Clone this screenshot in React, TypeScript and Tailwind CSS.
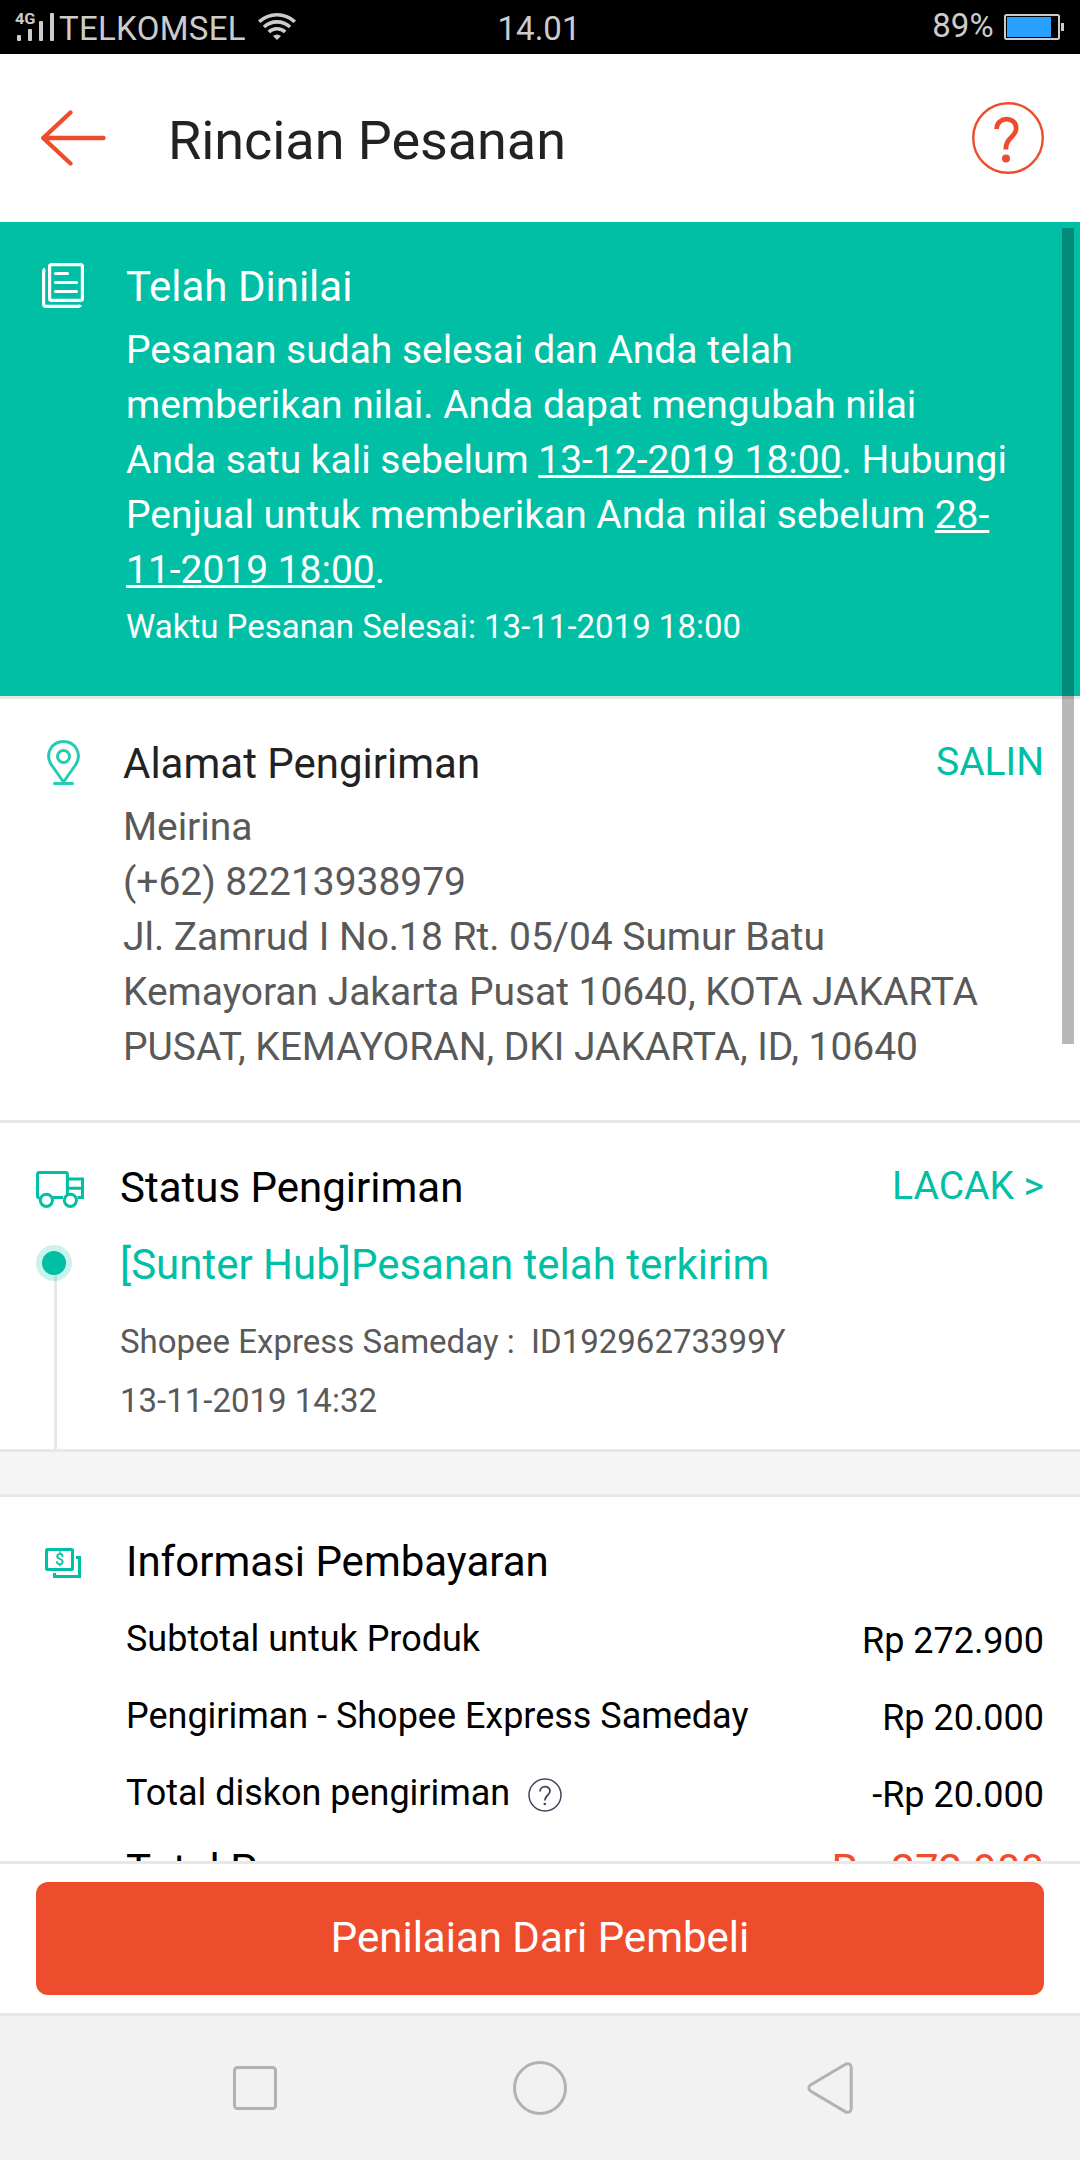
import type { ReactNode } from "react";

function SignalIcon() {
  return (
    <svg width="44" height="54" viewBox="0 0 44 54" className="ml-[15px] shrink-0 overflow-visible" fill="#cccccc">
      <text x="0" y="24" fontFamily="Roboto, sans-serif" fontWeight="700" fontSize="15.5" textLength="20.5" lengthAdjust="spacingAndGlyphs">4G</text>
      <rect x="2" y="35" width="4" height="6" rx="1" />
      <rect x="13" y="29" width="4" height="12" rx="1" />
      <rect x="24" y="21" width="4" height="20" rx="1" />
      <rect x="35" y="13" width="4" height="28" rx="1" />
    </svg>
  );
}

function WifiIcon() {
  return (
    <svg width="40" height="30" viewBox="0 0 40 30" className="absolute left-[257px] top-3" fill="none" stroke="#cccccc" strokeWidth="3.6">
      <path d="M2.2 9.8 A26 26 0 0 1 37.8 9.8" />
      <path d="M7 15 A19 19 0 0 1 33 15" />
      <path d="M11.8 20 A12 12 0 0 1 28.2 20" />
      <path d="M20 28 L16 24 Q20 21 24 24 Z" fill="#cccccc" stroke="none" />
    </svg>
  );
}

function BatteryIcon() {
  return (
    <svg width="60" height="26" viewBox="0 0 60 26" className="absolute right-4 top-[14px]">
      <rect x="1" y="1" width="54" height="24" rx="1.5" fill="none" stroke="#cccccc" strokeWidth="2" />
      <rect x="3" y="3" width="44" height="20" fill="#27a0ff" />
      <rect x="57" y="9" width="3" height="8" fill="#cccccc" />
    </svg>
  );
}

function StatusBar() {
  return (
    <div className="relative flex h-[54px] shrink-0 bg-black text-[33px] leading-[54px] text-[#cccccc]">
      <SignalIcon />
      <span className="pt-0.5 tracking-[0.3px]">TELKOMSEL</span>
      <WifiIcon />
      <span className="absolute left-[539px] -translate-x-1/2 pt-0.5">14.01</span>
      <span className="absolute right-[86px] -mt-px tracking-[0.2px]">89%</span>
      <BatteryIcon />
    </div>
  );
}

function Header() {
  return (
    <header className="flex h-[168px] shrink-0 items-center pl-9 pr-9">
      <svg width="72" height="60" viewBox="0 0 72 60" fill="none" stroke="#ee4d2d" strokeWidth="4.4" strokeLinecap="round" strokeLinejoin="round">
        <path d="M34.5 4.5 L7.2 30 L34.5 55.5 M7.2 30 H67.5" />
      </svg>
      <h1 className="ml-15 mt-[5px] text-[54px] leading-[64px] tracking-[-0.06px] text-[#222222]">Rincian Pesanan</h1>
      <svg width="72" height="72" viewBox="0 0 72 72" className="ml-auto" fill="none" stroke="#ee4d2d">
        <circle cx="36" cy="36" r="34.8" strokeWidth="2.4" />
        <path d="M24.6 27 C24.6 14 44.4 14 44.2 26.2 C44 35.5 33.8 35 33.8 47.5" strokeWidth="4.8" />
        <circle cx="34" cy="56.5" r="4" fill="#ee4d2d" stroke="none" />
      </svg>
    </header>
  );
}

function NotesIcon() {
  return (
    <svg width="42" height="45" viewBox="0 0 42 45" className="ml-[42px] mt-[41px]" fill="none" stroke="white" strokeWidth="3.2">
      <rect x="7.6" y="1.6" width="32.8" height="35.8" rx="2" />
      <path d="M3 6 Q1.6 6.8 1.6 9 V41 Q1.6 43.4 4 43.4 H36.5 Q38 43.2 38.6 42" />
      <path d="M13.5 10.5 H25.5 M13.5 19.5 H34.5 M13.5 28.5 H34.5" strokeLinecap="round" />
    </svg>
  );
}

function PinIcon() {
  return (
    <svg width="34" height="46" viewBox="0 0 34 46" className="ml-[47px] mt-[41px]" fill="none" stroke="#26cbb4" strokeWidth="3">
      <path d="M16.5 42 L4.2 24.5 C-2.5 13.5 5 1.5 16.5 1.5 S35.5 13.5 28.8 24.5 Z" strokeLinejoin="round" />
      <circle cx="16.5" cy="16.5" r="6" />
      <path d="M7.5 43.5 H25.5" strokeLinecap="round" />
    </svg>
  );
}

function TruckIcon() {
  return (
    <svg width="48" height="37" viewBox="0 0 48 37" className="ml-9 mt-12" fill="none" stroke="#00bfa5" strokeWidth="3">
      <path d="M3.8 27 Q1.5 27 1.5 24.7 V3.2 Q1.5 1.5 3.3 1.5 H29.7 Q31.4 1.5 31.4 3.2 V24 M17 26.5 H27 M32 8 H46.5 V26.5 H41.5 M32 17.3 H46" />
      <circle cx="10.4" cy="29.3" r="6.1" />
      <circle cx="34.4" cy="29.3" r="6.1" />
    </svg>
  );
}

function MoneyIcon() {
  return (
    <svg width="36" height="30" viewBox="0 0 36 30" className="ml-[45px] mt-[51px]" fill="none" stroke="#00bfa5" strokeWidth="3">
      <rect x="1.5" y="1.5" width="26" height="20" rx="1" />
      <path d="M31 9.5 H34.5 V28.5 H9.5 V25" />
      <text x="14.5" y="17.2" textAnchor="middle" fontFamily="Roboto, sans-serif" fontSize="16" fontWeight="500" fill="#00bfa5" stroke="none">$</text>
    </svg>
  );
}

function HelpIcon() {
  return (
    <svg width="34" height="34" viewBox="0 0 34 34" className="ml-[18px] mt-0.5" fill="none" stroke="#434359" strokeWidth="1.5">
      <circle cx="17" cy="17" r="16" />
      <path d="M12 13.6 C12 7.2 22 7.2 22 13 C22 17.5 16.8 17 16.8 22.6" strokeWidth="1.8" />
      <circle cx="16.8" cy="26" r="1.3" fill="#434359" stroke="none" />
    </svg>
  );
}

function Section({ icon, inset, children }: { icon: ReactNode; inset: string; children: ReactNode }) {
  return (
    <div className="flex h-full">
      <div className={`shrink-0 ${inset}`}>{icon}</div>
      <div className="min-w-0 flex-1 pr-9 pt-[35px]">{children}</div>
    </div>
  );
}

function Underlined({ children }: { children: ReactNode }) {
  return <u className="decoration-[3px] underline-offset-[2px] [text-decoration-skip-ink:none]">{children}</u>;
}

function OrderState() {
  return (
    <section className="h-[474px] shrink-0 bg-[#00bfa5] text-white">
      <Section icon={<NotesIcon />} inset="w-[126px]">
        <h2 className="text-[42px] leading-[60px]">Telah Dinilai</h2>
        <p className="mt-1.5 whitespace-nowrap text-[39px] leading-[55px] tracking-[-0.03px]">
          Pesanan sudah selesai dan Anda telah
          <br />
          memberikan nilai. Anda dapat mengubah nilai
          <br />
          Anda satu kali sebelum <Underlined>13-12-2019 18:00</Underlined>. Hubungi
          <br />
          Penjual untuk memberikan Anda nilai sebelum <Underlined>28-</Underlined>
          <br />
          <Underlined>11-2019 18:00</Underlined>.
        </p>
        <p className="mt-1.5 text-[33px] leading-[45px]">Waktu Pesanan Selesai: 13-11-2019 18:00</p>
      </Section>
    </section>
  );
}

function Address() {
  return (
    <section className="h-[427px] shrink-0 border-y-[3px] border-[#e8e8e8]">
      <Section icon={<PinIcon />} inset="w-[123px]">
        <div className="flex justify-between">
          <h2 className="text-[42px] leading-[60px] text-[#222222]">Alamat Pengiriman</h2>
          <span className="-mt-0.5 text-[39px] leading-[60px] text-[#00bfa5]">SALIN</span>
        </div>
        <p className="mt-1.5 whitespace-nowrap text-[39px] leading-[55px] tracking-[-0.04px] text-[#595959]">
          Meirina
          <br />
          (+62) 82213938979
          <br />
          Jl. Zamrud I No.18 Rt. 05/04 Sumur Batu
          <br />
          Kemayoran Jakarta Pusat 10640, KOTA JAKARTA
          <br />
          PUSAT, KEMAYORAN, DKI JAKARTA, ID, 10640
        </p>
      </Section>
    </section>
  );
}

function Timeline() {
  return (
    <>
      <TruckIcon />
      <div className="ml-9 mt-[37px] flex w-9 flex-col">
        <div className="relative z-10 flex size-9 items-center justify-center rounded-full bg-[#00bfa5]/20">
          <div className="size-6 rounded-full bg-[#00bfa5]" />
        </div>
        <div className="ml-[18px] -mt-1.5 h-[174px] w-[3px] bg-[#e8e8e8]" />
      </div>
    </>
  );
}

function Shipping() {
  return (
    <section className="h-[329px] shrink-0 border-b-[3px] border-[#e8e8e8]">
      <Section icon={<Timeline />} inset="w-[120px]">
        <div className="flex justify-between">
          <h2 className="text-[42px] leading-[60px] text-black">Status Pengiriman</h2>
          <span className="-mt-0.5 text-[39px] leading-[60px] text-[#00bfa5]">LACAK &gt;</span>
        </div>
        <p className="mt-[17px] text-[42px] leading-[60px] text-[#00bfa5]">[Sunter Hub]Pesanan telah terkirim</p>
        <p className="mt-6 whitespace-pre text-[33px] leading-[45px] text-[#595959]">{"Shopee Express Sameday :  ID19296273399Y"}</p>
        <p className="mt-3.5 text-[33px] leading-[45px] text-[#595959]">13-11-2019 14:32</p>
      </Section>
    </section>
  );
}

function Row({ label, value, help }: { label: string; value: string; help?: boolean }) {
  return (
    <div className="flex h-[77px] items-center justify-between text-[36px] leading-[77px] tracking-[-0.02px]">
      <div className="flex items-center">
        {label}
        {help && <HelpIcon />}
      </div>
      <span className="pt-1">{value}</span>
    </div>
  );
}

function Payment() {
  return (
    <section className="min-h-0 flex-1 overflow-hidden border-t-[3px] border-[#e8e8e8] text-black">
      <Section icon={<MoneyIcon />} inset="w-[126px]">
        <h2 className="mb-[9px] text-[42px] leading-[60px]">Informasi Pembayaran</h2>
        <Row label="Subtotal untuk Produk" value="Rp 272.900" />
        <Row label="Pengiriman - Shopee Express Sameday" value="Rp 20.000" />
        <Row label="Total diskon pengiriman" value="-Rp 20.000" help />
        <div className="mt-2 flex justify-between text-[42px] leading-[60px]">
          <span>Total Pesanan</span>
          <span className="text-[#ee4d2d]">Rp 272.900</span>
        </div>
      </Section>
    </section>
  );
}

function NavBar() {
  return (
    <nav className="flex h-36 shrink-0 items-center bg-[#f2f2f2]">
      <svg width="44" height="44" viewBox="0 0 44 44" className="ml-[233px]" fill="none" stroke="#b2b2b2" strokeWidth="3">
        <rect x="1.5" y="1.5" width="41" height="41" rx="3" />
      </svg>
      <svg width="54" height="54" viewBox="0 0 54 54" className="ml-[236px]" fill="none" stroke="#b2b2b2" strokeWidth="3">
        <circle cx="27" cy="27" r="25.5" />
      </svg>
      <svg width="46" height="52" viewBox="0 0 46 52" className="ml-[240px]" fill="none" stroke="#b2b2b2" strokeWidth="3">
        <path d="M38.5 2.2 L3.5 23 Q0.2 26 3.5 29 L38.5 49.8 Q44.2 51.8 44.2 46 V6 Q44.2 0.2 38.5 2.2 Z" />
      </svg>
    </nav>
  );
}

export default function App() {
  return (
    <div className="relative flex h-[2160px] w-[1080px] flex-col overflow-hidden bg-white font-['Roboto',sans-serif] font-normal">
      <StatusBar />
      <Header />
      <OrderState />
      <Address />
      <Shipping />
      <div className="h-[42px] shrink-0 bg-[#f5f5f5]" />
      <Payment />
      <footer className="shrink-0 border-y-[3px] border-[#e8e8e8] px-9 py-[18px]">
        <button className="block h-[113px] w-full rounded-xl bg-[#ee4d2d] pb-0.5 text-[42px] leading-[109px] text-white">Penilaian Dari Pembeli</button>
      </footer>
      <NavBar />
      <div className="absolute right-1.5 top-[228px] h-[816px] w-3 bg-black/28" />
    </div>
  );
}
